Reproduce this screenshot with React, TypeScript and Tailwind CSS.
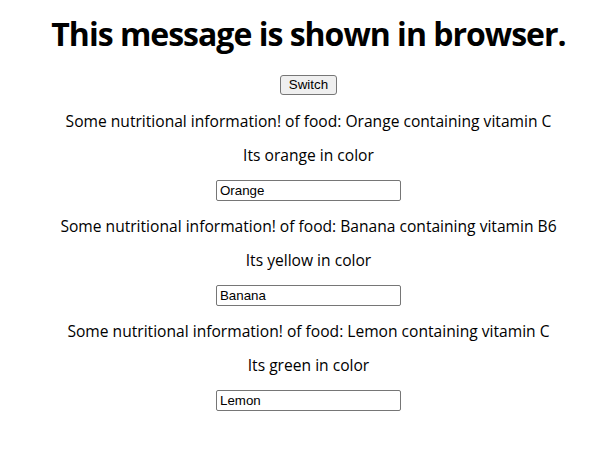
const foods = [
  { name: "Orange", vitamin: "C", color: "orange" },
  { name: "Banana", vitamin: "B6", color: "yellow" },
  { name: "Lemon", vitamin: "C", color: "green" },
];

export default function App() {
  return (
    <div className="flex flex-col items-center pl-[22px] text-center text-black bg-white font-['Open_Sans',sans-serif]">
      <h1 className="mt-[16px] text-[32px] leading-[36px] font-bold tracking-[-1px]">
        This message is shown in browser.
      </h1>
      <button className="mt-[23px] mb-[1px] h-[20px] px-[8px] bg-[#efefef] border border-[#767676] rounded-[3px] text-[13.33px] leading-none font-['Liberation_Sans',sans-serif]">
        Switch
      </button>
      {foods.map((f) => (
        <div key={f.name} className="flex flex-col items-center">
          <p className="mt-[16px] text-[15.6px] leading-[18px]">
            Some nutritional information! of food: {f.name} containing vitamin {f.vitamin}
          </p>
          <p className="mt-[16px] text-[15.6px] leading-[18px]">Its {f.color} in color</p>
          <input
            readOnly
            defaultValue={f.name}
            className="mt-[16px] w-[185px] h-[21px] px-[3px] border border-[#767676] rounded-[2px] text-[13.33px] font-['Liberation_Sans',sans-serif] outline-none"
          />
        </div>
      ))}
    </div>
  );
}
